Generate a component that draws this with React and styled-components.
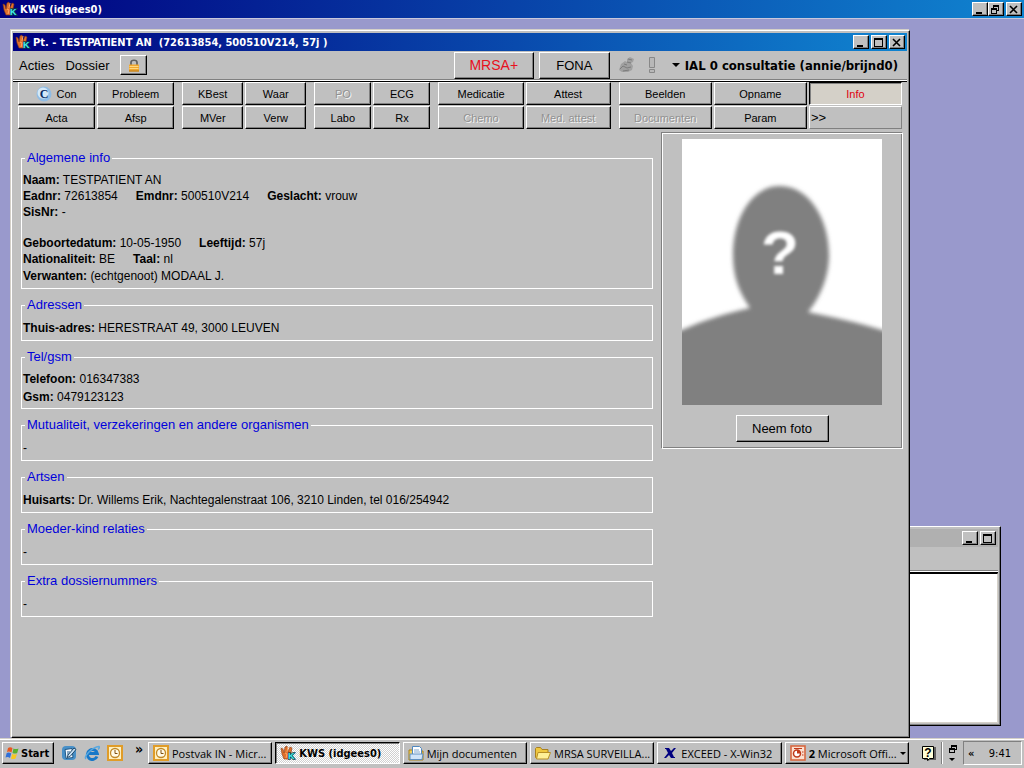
import React from "react";
import styled, { createGlobalStyle, css } from "styled-components";

const GlobalStyle = createGlobalStyle`
  * {
    box-sizing: border-box;
  }

  body {
    margin: 0;
    font-family: "Liberation Sans", Arial, sans-serif;
    font-size: 12px;
    color: #000;
  }

  button {
    font-family: inherit;
    color: inherit;
    margin: 0;
    padding: 0;
  }
`;

const uiFont = `"DejaVu Sans Condensed", Tahoma, sans-serif`;

const raised = css`
  background-color: #c0c0c0;
  border: 1px solid;
  border-color: #fff #000 #000 #fff;
  box-shadow: inset -1px -1px 0 #808080;
`;

const Screen = styled.div`
  display: flex;
  flex-direction: column;
  min-height: 100vh;
  background-color: #9999cc;
`;

const TitleBar = styled.header`
  display: flex;
  align-items: center;
  gap: 2px;
  height: 18px;
  flex: none;
  padding: 0 2px;
  color: #fff;
  font-family: ${uiFont};
  font-size: 11px;
  font-weight: bold;
  background: ${({ $inactive }) =>
    $inactive ? "#b0b0b0" : "linear-gradient(to right, #000080, #1084d0)"};
`;

const AppTitleBar = styled(TitleBar)`
  height: 19px;
  border-bottom: 1px solid #c8c8dc;
`;

const TitleText = styled.h1`
  flex: 1;
  margin: 0;
  font-size: inherit;
  white-space: pre;
`;

const TitleButtons = styled.div`
  display: flex;
`;

const TitleButton = styled.button`
  ${raised}
  display: flex;
  align-items: center;
  justify-content: center;
  width: 16px;
  height: 14px;
  margin-left: ${({ $gap }) => ($gap ? "2px" : "0")};
`;

const Desktop = styled.main`
  position: relative;
  flex: 1;
  min-height: 640px;
`;

const BackWindow = styled.section`
  position: absolute;
  right: 23px;
  bottom: 12px;
  width: 240px;
  height: 200px;
  display: flex;
  flex-direction: column;
  padding: 2px;
  ${raised}
`;

const BackMenu = styled.div`
  height: 26px;
  border-bottom: 1px solid #000;
  box-shadow: inset 0 -1px 0 #fff, inset 0 -2px 0 #808080;
`;

const BackContent = styled.div`
  flex: 1;
  background-color: #fff;
  border: 1px solid #d4d0c8;
  border-top-color: #000;
`;

const Window = styled.section`
  position: absolute;
  top: 11px;
  left: 11px;
  right: 114px;
  bottom: 0;
  display: flex;
  flex-direction: column;
  padding: 2px 2px 0 1px;
  background-color: #c0c0c0;
  border: 1px solid;
  border-color: #fff #000 #000 #fff;
  box-shadow: inset -1px -1px 0 #808080, -1px -1px 0 #d4d0c8;
`;

const MenuRow = styled.nav`
  display: flex;
  align-items: center;
  height: 29px;
  flex: none;
  padding: 0 9px 0 6px;
  border-bottom: 1px solid #808080;
  font-size: 13px;
`;

const MenuItem = styled.button`
  background: none;
  border: none;
  font-size: 13px;
  margin-right: 11px;
`;

const LockButton = styled.button`
  ${raised}
  display: flex;
  align-items: center;
  justify-content: center;
  width: 27px;
  height: 20px;
`;

const MenuRight = styled.div`
  display: flex;
  align-items: center;
  margin-left: auto;
`;

const FlagButton = styled.button`
  ${raised}
  width: ${({ $wide }) => ($wide ? "80px" : "71px")};
  height: 27px;
  margin-right: ${({ $wide }) => ($wide ? "5px" : "8px")};
  font-size: ${({ $wide }) => ($wide ? "14px" : "13px")};
  color: ${({ $alert }) => ($alert ? "#e81020" : "#000")};
`;

const StatusIcons = styled.div`
  display: flex;
  align-items: center;
  gap: 12px;
  margin-right: 16px;
`;

const UnitButton = styled.button`
  display: flex;
  align-items: center;
  gap: 5px;
  background: none;
  border: none;
  font-family: ${uiFont};
  font-size: 13px;
  font-weight: bold;
  white-space: nowrap;
`;

const Toolbar = styled.div`
  display: flex;
  gap: 8px;
  margin-top: 1px;
  padding: 0 5px;
  border-top: 1px solid #000;
  box-shadow: 0 -1px 0 #fff;
`;

const ToolGroup = styled.div`
  display: grid;
  flex: ${({ $size }) => $size} 1 0;
  grid-template-columns: repeat(${({ $columns }) => $columns}, 1fr);
  grid-auto-rows: 23px;
  gap: 1px 2px;
`;

const ToolButton = styled.button`
  ${raised}
  display: flex;
  align-items: center;
  justify-content: center;
  gap: 4px;
  min-width: 0;
  font-size: 11px;
  white-space: nowrap;

  &:disabled {
    color: #929292;
    text-shadow: 1px 1px 0 #f4f4f4;
  }

  ${({ $pressed }) =>
    $pressed &&
    css`
      color: #e00010;
      background-color: #d4d0c8;
      border-color: #000 #fff #fff #000;
      box-shadow: inset 1px 1px 0 #808080;
    `}

  ${({ $more }) =>
    $more &&
    css`
      justify-content: flex-start;
      padding-left: 1px;
      font-size: 13px;
      border-color: #fff #808080 #808080 #fff;
      box-shadow: none;
    `}
`;

const Content = styled.div`
  display: flex;
  align-items: flex-start;
  gap: 8px;
  padding: 3px 4px 0 8px;
`;

const InfoColumn = styled.div`
  display: flex;
  flex: 1;
  flex-direction: column;
  gap: 8px;
  padding-top: 18px;
`;

const Group = styled.fieldset`
  min-width: 0;
  margin: 0;
  padding: ${({ $compact }) => ($compact ? "5px 1px 2px" : "6px 1px 3px")};
  border: 1px solid #fff;
`;

const GroupTitle = styled.legend`
  margin-left: 2px;
  padding: 0 2px;
  font-size: 13px;
  line-height: 16px;
  color: #0000dc;
`;

const Line = styled.p`
  margin: 0;
  line-height: ${({ $tight }) => ($tight ? "16px" : "18px")};
  min-height: ${({ $tight }) => ($tight ? "15px" : "18px")};
`;

const Field = styled.span`
  margin-right: 18px;
`;

const PhotoPanel = styled.aside`
  display: flex;
  flex-direction: column;
  align-items: center;
  gap: 10px;
  width: 242px;
  padding: 6px 0;
  border: 1px solid;
  border-color: #808080 #fff #fff #808080;
  box-shadow: inset 1px 1px 0 #fff, inset -1px -1px 0 #808080;
`;

const PhotoButton = styled.button`
  ${raised}
  width: 93px;
  height: 27px;
  font-size: 13px;
`;

const Taskbar = styled.footer`
  display: flex;
  align-items: center;
  height: 30px;
  flex: none;
  padding: 0 2px;
  background-color: #c0c0c0;
  box-shadow: inset 0 1px 0 #d4d0c8, inset 0 2px 0 #fff;
  font-family: ${uiFont};
  font-size: 11px;
`;

const StartButton = styled.button`
  ${raised}
  display: flex;
  align-items: center;
  gap: 1px;
  width: 52px;
  height: 22px;
  padding-left: 2px;
  font-size: 11px;
  font-weight: bold;
`;

const QuickLaunch = styled.div`
  display: flex;
  align-items: center;
  gap: 7px;
  width: 94px;
  padding-left: 7px;
`;

const IconButton = styled.button`
  display: flex;
  background: none;
  border: none;
`;

const Chevron = styled.span`
  margin: 0 0 8px 5px;
  font-size: 14px;
  font-weight: bold;
  line-height: 12px;
`;

const Tasks = styled.div`
  display: flex;
  flex: 1;
  gap: 3px;
  min-width: 0;
`;

const TaskButton = styled.button`
  ${raised}
  display: flex;
  align-items: center;
  flex: 1 1 0;
  gap: 3px;
  min-width: 0;
  height: 22px;
  padding: 0 2px 0 4px;
  font-family: "Open Sans", Tahoma, sans-serif;
  font-size: 11px;

  ${({ $active }) =>
    $active &&
    css`
      font-family: ${uiFont};
      font-weight: bold;
      background: repeating-conic-gradient(#fff 0 25%, #d0d0d0 0 50%) 0 0 / 2px
        2px;
      border-color: #000 #fff #fff #000;
      box-shadow: inset 1px 1px 0 #808080;
    `}
`;

const TaskLabel = styled.span`
  flex: 1;
  overflow: hidden;
  text-align: left;
  white-space: nowrap;
`;

const Tray = styled.div`
  display: flex;
  align-items: center;
  gap: 5px;
  padding-left: 13px;
`;

const Divider = styled.span`
  width: 2px;
  height: 22px;
  border-left: 1px solid #808080;
  border-right: 1px solid #fff;
`;

const Clock = styled.div`
  display: flex;
  align-items: center;
  justify-content: space-between;
  width: 59px;
  height: 24px;
  padding: 0 10px 0 4px;
  border: 1px solid;
  border-color: #808080 #fff #fff #808080;
`;

function KwsIcon() {
  return (
    <svg width="16" height="16" viewBox="0 0 16 16" aria-hidden="true">
      <path
        d="M1 3l2 1 1 4 1-6 2-1 1 6 2-5 2 1-1 5-2 6H4L2 9z"
        fill="#e0702c"
        stroke="#8a3a10"
        strokeWidth="0.6"
      />
      <path d="M5 8l2 1-1 4M8 2l-1 5" stroke="#ffa860" fill="none" />
      <text
        x="8"
        y="14"
        fontFamily="Liberation Sans"
        fontSize="9"
        fontWeight="bold"
        fill="#40f0f0"
        stroke="#084048"
        strokeWidth="1.5"
        paintOrder="stroke"
      >
        K
      </text>
    </svg>
  );
}

function MinimizeGlyph() {
  return (
    <svg width="10" height="9" viewBox="0 0 10 9" aria-hidden="true">
      <path d="M1 7h6v2H1z" />
    </svg>
  );
}

function MaximizeGlyph() {
  return (
    <svg width="10" height="9" viewBox="0 0 10 9" aria-hidden="true">
      <path d="M0 0h9v9H0zM1 2v6h7V2z" fillRule="evenodd" />
    </svg>
  );
}

function RestoreGlyph() {
  return (
    <svg width="10" height="9" viewBox="0 0 10 9" aria-hidden="true">
      <path
        d="M2 0h6v6H6V5h1V2H3v1H2zM0 3h6v6H0zM1 5v3h4V5z"
        fillRule="evenodd"
      />
    </svg>
  );
}

function CloseGlyph() {
  return (
    <svg width="10" height="9" viewBox="0 0 10 9" aria-hidden="true">
      <path d="M1 1l7 7M8 1l-7 7" stroke="#000" strokeWidth="1.6" />
    </svg>
  );
}

function LockIcon() {
  return (
    <svg width="12" height="13" viewBox="0 0 12 13" aria-hidden="true">
      <path
        d="M3 6V3.500C3 .5 9 .5 9 3.500V6"
        fill="none"
        stroke="#606060"
        strokeWidth="1.700"
      />
      <rect x="1" y="5.500" width="10" height="7" rx="0.500" fill="#f0a830" />
      <path d="M1.500 7.500h9M1.500 9.500h9" stroke="#ffd880" />
      <path d="M1 12h10" stroke="#b87818" />
    </svg>
  );
}

function ContaminationIcon() {
  return (
    <svg width="18" height="18" viewBox="0 0 18 18" aria-hidden="true">
      <path
        d="M1 14l2-6 4-3 2 1V3l3-2 4 2-1 3-2 1 2 3-1 4-4 2H4z"
        fill="#a0a0a0"
      />
      <path
        d="M2 13l3-3 4 2 4-1M9 6l4 1M10 3l4 1M5 15l6-1M6 8l3 1"
        stroke="#7c7c7c"
        fill="none"
      />
    </svg>
  );
}

function ExclamationIcon() {
  return (
    <svg width="8" height="18" viewBox="0 0 8 18" aria-hidden="true">
      <path
        d="M1.500 1.500h5v10h-5zM1.500 13.500h5v3h-5z"
        fill="#b8b8b8"
        stroke="#888"
      />
    </svg>
  );
}

function DownArrow({ size = 8 }) {
  return (
    <svg width={size} height={size / 2} viewBox="0 0 8 4" aria-hidden="true">
      <path d="M0 0h8L4 4z" />
    </svg>
  );
}

function ConIcon() {
  return (
    <svg width="16" height="16" viewBox="0 0 16 16" aria-hidden="true">
      <circle cx="8" cy="8" r="7.500" fill="#90bce4" />
      <circle cx="7" cy="7" r="5.500" fill="#d4e8f8" />
      <text
        x="8"
        y="12"
        textAnchor="middle"
        fontFamily="Liberation Serif"
        fontSize="12"
        fontWeight="bold"
        fill="#082860"
      >
        C
      </text>
    </svg>
  );
}

function PatientSilhouette() {
  return (
    <svg
      width="200"
      height="266"
      viewBox="0 0 200 266"
      role="img"
      aria-label="Geen foto"
    >
      <defs>
        <filter id="soft" x="-20%" y="-20%" width="140%" height="140%">
          <feGaussianBlur stdDeviation="2" />
        </filter>
        <filter id="softMark" x="-20%" y="-20%" width="140%" height="140%">
          <feGaussianBlur stdDeviation="1.500" />
        </filter>
      </defs>
      <rect width="200" height="266" fill="#fff" />
      <g filter="url(#soft)" fill="#808080">
        <path d="M98 47C127 47 147 80 147 116C147 139 137 160 126 173C150 178 178 184 200 191L230 200V300H-30V201L0 191C22 181 45 174 68 169C57 153 51 138 51 116C51 80 69 47 98 47z" />
      </g>
      <text
        x="98"
        y="135"
        textAnchor="middle"
        fontFamily="Liberation Sans"
        fontSize="62"
        fontWeight="bold"
        fill="#fff"
        filter="url(#softMark)"
      >
        ?
      </text>
    </svg>
  );
}

function WindowsFlag() {
  return (
    <svg width="15" height="14" viewBox="0 0 15 14" aria-hidden="true">
      <path d="M3 2q2-1.500 4.500 0L6.500 6.500Q4 5 2 6z" fill="#e85820" />
      <path d="M8.500 2.500q2 1 5 0l-1.300 4.500q-2 1-4.700 0z" fill="#58b030" />
      <path d="M1.700 7q2-1 4.500.5L5 12Q3 10.500.5 11.500z" fill="#3070d8" />
      <path d="M7.200 8q2 1 4.800 0l-1.500 4.500q-2 1-4.500 0z" fill="#f8c820" />
    </svg>
  );
}

function DesktopIcon() {
  return (
    <svg width="16" height="16" viewBox="0 0 16 16" aria-hidden="true">
      <rect x="1" y="1" width="14" height="14" rx="4" fill="#4890c8" />
      <path d="M4 4.500l7-1 1 9-7 1z" fill="#f4faff" stroke="#205888" />
      <path d="M6 7h3M6 9h2" stroke="#205888" />
      <path d="M7 10l6-7 2 1.500-6 7-3 1z" fill="#c8e0f4" stroke="#204868" />
    </svg>
  );
}

function ExplorerIcon() {
  return (
    <svg width="16" height="16" viewBox="0 0 16 16" aria-hidden="true">
      <path
        d="M13 11.500a5 5 0 1 1 .3-3H5"
        fill="none"
        stroke="#1878c8"
        strokeWidth="3"
      />
      <path
        d="M2 14C-1 12 8 2 15 1.500c1 1 0 2-1 3"
        fill="none"
        stroke="#58a8e0"
        strokeWidth="1.500"
      />
    </svg>
  );
}

function OutlookIcon() {
  return (
    <svg width="16" height="16" viewBox="0 0 16 16" aria-hidden="true">
      <rect
        x="1"
        y="1"
        width="14"
        height="14"
        fill="#fff0c0"
        stroke="#e09c28"
        strokeWidth="2"
      />
      <circle
        cx="8"
        cy="8"
        r="4.500"
        fill="#fffbe8"
        stroke="#c08828"
        strokeWidth="1.300"
      />
      <path d="M8 5v3.500h2.500" fill="none" stroke="#805010" />
    </svg>
  );
}

function DocumentsIcon() {
  return (
    <svg width="16" height="16" viewBox="0 0 16 16" aria-hidden="true">
      <path d="M1 5h4l1 1h9v9H1z" fill="#f0d060" stroke="#a88018" />
      <path d="M4.500 1.500h7l2 2v7h-9z" fill="#fff" stroke="#5088c0" />
      <path d="M6 5h5M6 7h6" stroke="#80a8d0" />
      <path d="M2 9h13l-1 5.500H2z" fill="#d0e4f8" stroke="#6090c0" />
    </svg>
  );
}

function FolderIcon() {
  return (
    <svg width="16" height="16" viewBox="0 0 16 16" aria-hidden="true">
      <path
        d="M.5 3.500l1-1h4l1.500 2h6v9H1.500l-1-1z"
        fill="#f0c840"
        stroke="#a88020"
      />
      <path d="M3 7.500h12.500L13 14H1.500z" fill="#fff098" stroke="#b89028" />
    </svg>
  );
}

function ExceedIcon() {
  return (
    <svg width="16" height="16" viewBox="0 0 16 16" aria-hidden="true">
      <path
        d="M3 3h4l2 3 3-3h2l-4 5 2 4h1v1H9L7 10l-3 3H2l4-5-2-4H3z"
        fill="#000080"
      />
    </svg>
  );
}

function PowerpointIcon() {
  return (
    <svg width="16" height="16" viewBox="0 0 16 16" aria-hidden="true">
      <rect
        x="1"
        y="1"
        width="14"
        height="14"
        fill="#fbe0d0"
        stroke="#d86840"
        strokeWidth="1.600"
      />
      <circle
        cx="7"
        cy="8.500"
        r="3.500"
        fill="#fff"
        stroke="#c03818"
        strokeWidth="1.500"
      />
      <path d="M7 8.500V5A3.500 3.500 0 0 1 10.500 8.500z" fill="#c03818" />
      <path d="M12 7h1.500M12 10h1.500M4 3.500h8" stroke="#c03818" />
    </svg>
  );
}

function HelpIcon() {
  return (
    <svg width="14" height="16" viewBox="0 0 14 16" aria-hidden="true">
      <path d="M2 2h12v13H8l-2 1v-1H2z" fill="#606060" />
      <path
        d="M.5 1.500h11v12h-4l-2 2v-2h-5z"
        fill="#ffffd8"
        stroke="#000"
      />
      <text
        x="6"
        y="12"
        textAnchor="middle"
        fontFamily="Liberation Sans"
        fontSize="12"
        fontWeight="bold"
      >
        ?
      </text>
    </svg>
  );
}

function LanguageBarIcon() {
  return (
    <svg width="10" height="17" viewBox="0 0 10 17" aria-hidden="true">
      <path
        d="M3 0h6v5H7V4h1V2H4v1H3zM1 3h6v5H1zM2 5v2h4V5z"
        fillRule="evenodd"
      />
      <path d="M1 13h6l-3 3z" />
    </svg>
  );
}

const toolGroups = [
  {
    size: 156,
    columns: 2,
    items: [
      { label: "Con", icon: <ConIcon /> },
      { label: "Probleem" },
      { label: "Acta" },
      { label: "Afsp" },
    ],
  },
  {
    size: 124,
    columns: 2,
    items: [
      { label: "KBest" },
      { label: "Waar" },
      { label: "MVer" },
      { label: "Verw" },
    ],
  },
  {
    size: 116,
    columns: 2,
    items: [
      { label: "PO", disabled: true },
      { label: "ECG" },
      { label: "Labo" },
      { label: "Rx" },
    ],
  },
  {
    size: 172,
    columns: 2,
    items: [
      { label: "Medicatie" },
      { label: "Attest" },
      { label: "Chemo", disabled: true },
      { label: "Med. attest", disabled: true },
    ],
  },
  {
    size: 283,
    columns: 3,
    items: [
      { label: "Beelden" },
      { label: "Opname" },
      { label: "Info", pressed: true },
      { label: "Documenten", disabled: true },
      { label: "Param" },
      { label: ">>", more: true },
    ],
  },
];

const infoGroups = [
  {
    title: "Algemene info",
    tight: true,
    lines: [
      [["Naam:", "TESTPATIENT AN"]],
      [
        ["Eadnr:", "72613854"],
        ["Emdnr:", "500510V214"],
        ["Geslacht:", "vrouw"],
      ],
      [["SisNr:", "-"]],
      [],
      [
        ["Geboortedatum:", "10-05-1950"],
        ["Leeftijd:", "57j"],
      ],
      [
        ["Nationaliteit:", "BE"],
        ["Taal:", "nl"],
      ],
      [["Verwanten:", "(echtgenoot) MODAAL J."]],
    ],
  },
  {
    title: "Adressen",
    lines: [[["Thuis-adres:", "HERESTRAAT 49, 3000 LEUVEN"]]],
  },
  {
    title: "Tel/gsm",
    compact: true,
    lines: [[["Telefoon:", "016347383"]], [["Gsm:", "0479123123"]]],
  },
  {
    title: "Mutualiteit, verzekeringen en andere organismen",
    lines: [[["", "-"]]],
  },
  {
    title: "Artsen",
    lines: [
      [
        [
          "Huisarts:",
          "Dr. Willems Erik, Nachtegalenstraat 106, 3210 Linden, tel 016/254942",
        ],
      ],
    ],
  },
  { title: "Moeder-kind relaties", lines: [[["", "-"]]] },
  { title: "Extra dossiernummers", lines: [[["", "-"]]] },
];

const tasks = [
  { label: "Postvak IN - Micr...", icon: <OutlookIcon /> },
  { label: "KWS (idgees0)", icon: <KwsIcon />, active: true },
  { label: "Mijn documenten", icon: <DocumentsIcon /> },
  { label: "MRSA SURVEILLA...", icon: <FolderIcon /> },
  { label: "EXCEED - X-Win32", icon: <ExceedIcon /> },
  { label: "Microsoft Offi...", count: 2, icon: <PowerpointIcon /> },
];

function InfoGroup({ title, lines, tight, compact }) {
  return (
    <Group $compact={compact}>
      <GroupTitle>{title}</GroupTitle>
      {lines.map((fields, i) => (
        <Line key={i} $tight={tight && i < lines.length - 1}>
          {fields.map(([label, value]) => (
            <Field key={label}>
              {label && <b>{label}</b>} {value}
            </Field>
          ))}
        </Line>
      ))}
    </Group>
  );
}

export default function App() {
  return (
    <Screen>
      <GlobalStyle />
      <AppTitleBar>
        <KwsIcon />
        <TitleText>KWS (idgees0)</TitleText>
        <TitleButtons>
          <TitleButton aria-label="Minimize">
            <MinimizeGlyph />
          </TitleButton>
          <TitleButton aria-label="Restore">
            <RestoreGlyph />
          </TitleButton>
          <TitleButton aria-label="Close" $gap>
            <CloseGlyph />
          </TitleButton>
        </TitleButtons>
      </AppTitleBar>

      <Desktop>
        <BackWindow>
          <TitleBar $inactive>
            <TitleText as="span" />
            <TitleButtons>
              <TitleButton aria-label="Minimize">
                <MinimizeGlyph />
              </TitleButton>
              <TitleButton aria-label="Maximize" $gap>
                <MaximizeGlyph />
              </TitleButton>
            </TitleButtons>
          </TitleBar>
          <BackMenu />
          <BackContent />
        </BackWindow>

        <Window>
          <TitleBar>
            <KwsIcon />
            <TitleText as="h2">
              {"Pt. - TESTPATIENT AN  (72613854, 500510V214, 57j )"}
            </TitleText>
            <TitleButtons>
              <TitleButton aria-label="Minimize">
                <MinimizeGlyph />
              </TitleButton>
              <TitleButton aria-label="Maximize" $gap>
                <MaximizeGlyph />
              </TitleButton>
              <TitleButton aria-label="Close" $gap>
                <CloseGlyph />
              </TitleButton>
            </TitleButtons>
          </TitleBar>

          <MenuRow>
            <MenuItem>Acties</MenuItem>
            <MenuItem>Dossier</MenuItem>
            <LockButton aria-label="Vergrendel">
              <LockIcon />
            </LockButton>
            <MenuRight>
              <FlagButton $wide $alert>
                MRSA+
              </FlagButton>
              <FlagButton>FONA</FlagButton>
              <StatusIcons>
                <ContaminationIcon />
                <ExclamationIcon />
              </StatusIcons>
              <UnitButton>
                <DownArrow />
                IAL 0 consultatie (annie/brijnd0)
              </UnitButton>
            </MenuRight>
          </MenuRow>

          <Toolbar>
            {toolGroups.map((group) => (
              <ToolGroup
                key={group.size}
                $size={group.size}
                $columns={group.columns}
              >
                {group.items.map((item) => (
                  <ToolButton
                    key={item.label}
                    disabled={item.disabled}
                    $pressed={item.pressed}
                    $more={item.more}
                  >
                    {item.icon}
                    {item.label}
                  </ToolButton>
                ))}
              </ToolGroup>
            ))}
          </Toolbar>

          <Content>
            <InfoColumn>
              {infoGroups.map((group) => (
                <InfoGroup key={group.title} {...group} />
              ))}
            </InfoColumn>
            <PhotoPanel>
              <PatientSilhouette />
              <PhotoButton>Neem foto</PhotoButton>
            </PhotoPanel>
          </Content>
        </Window>
      </Desktop>

      <Taskbar>
        <StartButton>
          <WindowsFlag />
          Start
        </StartButton>
        <QuickLaunch>
          <IconButton aria-label="Bureaublad">
            <DesktopIcon />
          </IconButton>
          <IconButton aria-label="Internet Explorer">
            <ExplorerIcon />
          </IconButton>
          <IconButton aria-label="Outlook">
            <OutlookIcon />
          </IconButton>
          <Chevron>»</Chevron>
        </QuickLaunch>
        <Tasks>
          {tasks.map((task) => (
            <TaskButton key={task.label} $active={task.active}>
              {task.icon}
              <TaskLabel>
                {task.count && <b>{task.count} </b>}
                {task.label}
              </TaskLabel>
              {task.count && <DownArrow size={6} />}
            </TaskButton>
          ))}
        </Tasks>
        <Tray>
          <IconButton aria-label="Help">
            <HelpIcon />
          </IconButton>
          <Divider />
          <LanguageBarIcon />
          <Clock>
            <b>«</b>
            <time>9:41</time>
          </Clock>
        </Tray>
      </Taskbar>
    </Screen>
  );
}
